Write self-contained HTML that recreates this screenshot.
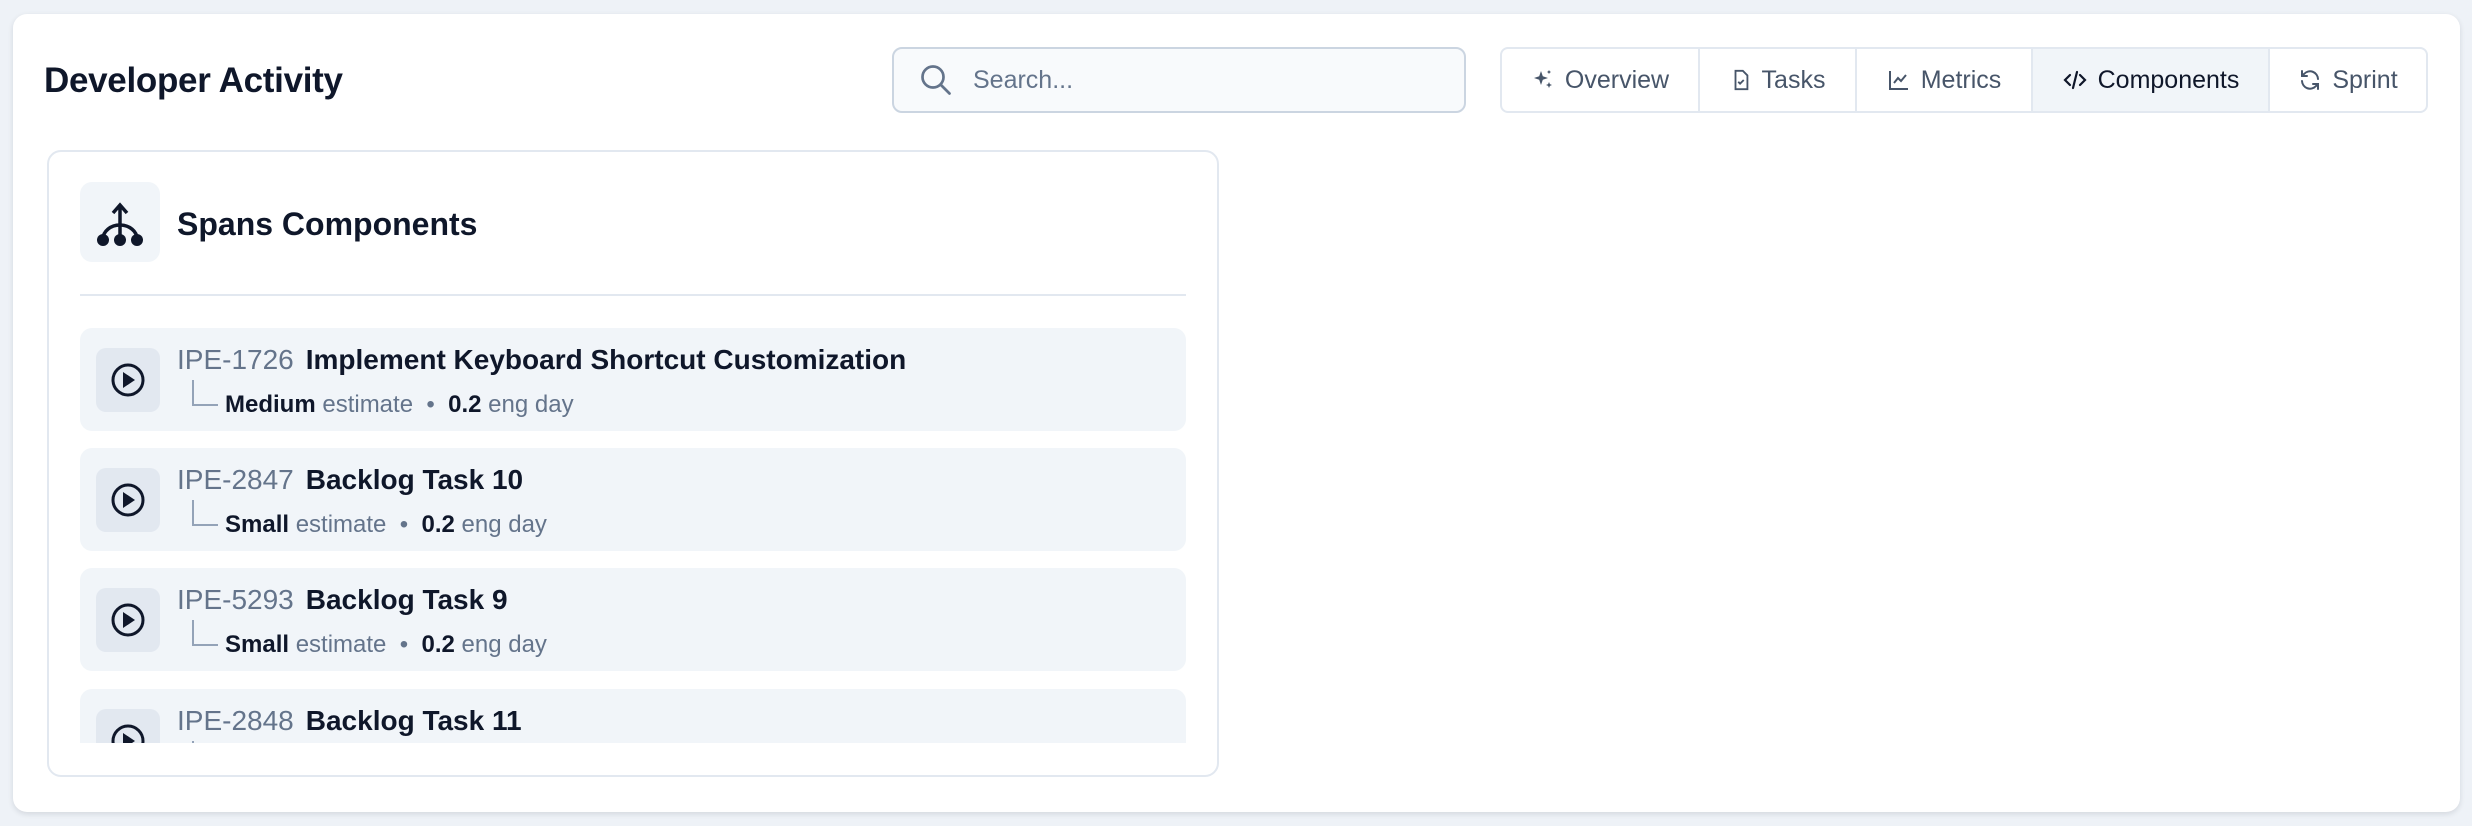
<!DOCTYPE html>
<html><head><meta charset="utf-8"><style>
*{box-sizing:border-box;margin:0;padding:0}
body{width:2472px;height:826px;background:#eef2f7;font-family:"Liberation Sans",sans-serif;position:relative;overflow:hidden}
.a{position:absolute}
.card{left:13px;top:14px;width:2447px;height:798px;background:#fff;border-radius:14px;box-shadow:0 2px 6px rgba(15,23,42,.12)}
.title{left:44px;top:61px;font-size:35px;font-weight:600;color:#0f172a;letter-spacing:-0.3px}
.search{left:892px;top:47px;width:574px;height:66px;background:#f8fafc;border:2px solid #cbd5e1;border-radius:10px}
.ph{left:973px;top:66px;font-size:25px;color:#64748b}
.tabs{left:1500px;top:47px;width:928px;height:66px;border:2px solid #e2e8f0;border-radius:8px;display:flex;overflow:hidden}
.tab{display:flex;align-items:center;justify-content:center;gap:10px;font-size:25px;color:#475569;border-right:2px solid #e2e8f0;height:100%}
.tab:last-child{border-right:none}
.tab.on{background:#f1f5f9;color:#0f172a}
.panel{left:47px;top:150px;width:1172px;height:627px;border:2px solid #e2e8f0;border-radius:14px}
.ib{left:80px;top:182px;width:80px;height:80px;background:#f1f5f9;border-radius:12px}
.ptitle{left:177px;top:206px;font-size:32px;font-weight:600;color:#0f172a}
.div{left:80px;top:294px;width:1106px;height:2px;background:#e2e8f0}
.clip{left:80px;top:328px;width:1106px;height:415px;overflow:hidden}
.row{position:absolute;left:0;width:1106px;height:103px;background:#f1f5f9;border-radius:12px}
.pb{position:absolute;left:16px;top:20px;width:64px;height:64px;background:#e2e8f0;border-radius:10px}
.l1{position:absolute;left:97px;top:16px;font-size:28px;white-space:nowrap}
.id{color:#64748b}
.nm{color:#0f172a;font-weight:600;margin-left:12px}
.tree{position:absolute;left:112px;top:52px;width:26px;height:26px;border-left:2px solid #94a3b8;border-bottom:2px solid #94a3b8}
.l2{position:absolute;left:145px;top:63px;font-size:24px;color:#64748b;white-space:nowrap}
.l2 b{color:#0f172a;font-weight:600}
</style></head><body>
<div class="a card"></div>
<div class="a title">Developer Activity</div>
<div class="a search"></div>
<svg class="a" style="left:918px;top:62px" width="36" height="36" viewBox="0 0 24 24" fill="none" stroke="#64748b" stroke-width="1.8" stroke-linecap="round"><circle cx="10" cy="10" r="7"/><path d="M15.5 15.5L21 21"/></svg>
<div class="a ph">Search...</div>
<div class="a tabs">
<div class="tab" style="width:198px"><svg width="24" height="24" viewBox="0 0 24 24" fill="#475569"><path d="M10 3l1.8 5.2L17 10l-5.2 1.8L10 17l-1.8-5.2L3 10l5.2-1.8z"/><path d="M18 14l.9 2.1L21 17l-2.1.9L18 20l-.9-2.1L15 17l2.1-.9z"/><path d="M18 2l.7 1.3L20 4l-1.3.7L18 6l-.7-1.3L16 4l1.3-.7z"/></svg>Overview</div>
<div class="tab" style="width:157px"><svg width="22" height="26" viewBox="0 0 24 24" fill="none" stroke="#475569" stroke-width="2"><path d="M6 2h8l5 5v15H6z"/><path d="M9 14l2 2 4-4"/></svg>Tasks</div>
<div class="tab" style="width:176px"><svg width="24" height="24" viewBox="0 0 24 24" fill="none" stroke="#475569" stroke-width="2"><path d="M3 3v18h18"/><path d="M7 15l4-5 3 3 5-6"/></svg>Metrics</div>
<div class="tab on" style="width:237px"><svg width="26" height="24" viewBox="0 0 24 24" fill="none" stroke="#0f172a" stroke-width="2.2" stroke-linecap="round"><path d="M7 7l-5 5 5 5M17 7l5 5-5 5M14 4l-4 16"/></svg>Components</div>
<div class="tab" style="flex:1"><svg width="24" height="24" viewBox="0 0 24 24" fill="none" stroke="#475569" stroke-width="2" stroke-linecap="round"><path d="M20 11a8 8 0 0 0-14-5L4 8M4 3v5h5M4 13a8 8 0 0 0 14 5l2-2M20 21v-5h-5"/></svg>Sprint</div>
</div>
<div class="a panel"></div>
<div class="a ib"></div>
<svg class="a" style="left:80px;top:182px" width="80" height="80" viewBox="0 0 80 80"><path d="M40 24v33M33 31l7-8 7 8" fill="none" stroke="#0f172a" stroke-width="3.5"/><path d="M23 57a17 14 0 0 1 34 0" fill="none" stroke="#0f172a" stroke-width="3.5"/><circle cx="23" cy="58" r="6" fill="#0f172a"/><circle cx="40" cy="58" r="6" fill="#0f172a"/><circle cx="57" cy="58" r="6" fill="#0f172a"/></svg>
<div class="a ptitle">Spans Components</div>
<div class="a div"></div>
<div class="a clip">
<div class="row" style="top:0"><div class="pb"><svg width="64" height="64" viewBox="0 0 64 64"><circle cx="32" cy="32" r="15" fill="none" stroke="#0f172a" stroke-width="3"/><path d="M27 24l12 8-12 8z" fill="#0f172a"/></svg></div><div class="l1"><span class="id">IPE-1726</span><span class="nm">Implement Keyboard Shortcut Customization</span></div><div class="tree"></div><div class="l2"><b>Medium</b> estimate &nbsp;•&nbsp; <b>0.2</b> eng day</div></div>
<div class="row" style="top:120px"><div class="pb"><svg width="64" height="64" viewBox="0 0 64 64"><circle cx="32" cy="32" r="15" fill="none" stroke="#0f172a" stroke-width="3"/><path d="M27 24l12 8-12 8z" fill="#0f172a"/></svg></div><div class="l1"><span class="id">IPE-2847</span><span class="nm">Backlog Task 10</span></div><div class="tree"></div><div class="l2"><b>Small</b> estimate &nbsp;•&nbsp; <b>0.2</b> eng day</div></div>
<div class="row" style="top:240px"><div class="pb"><svg width="64" height="64" viewBox="0 0 64 64"><circle cx="32" cy="32" r="15" fill="none" stroke="#0f172a" stroke-width="3"/><path d="M27 24l12 8-12 8z" fill="#0f172a"/></svg></div><div class="l1"><span class="id">IPE-5293</span><span class="nm">Backlog Task 9</span></div><div class="tree"></div><div class="l2"><b>Small</b> estimate &nbsp;•&nbsp; <b>0.2</b> eng day</div></div>
<div class="row" style="top:361px"><div class="pb"><svg width="64" height="64" viewBox="0 0 64 64"><circle cx="32" cy="32" r="15" fill="none" stroke="#0f172a" stroke-width="3"/><path d="M27 24l12 8-12 8z" fill="#0f172a"/></svg></div><div class="l1"><span class="id">IPE-2848</span><span class="nm">Backlog Task 11</span></div><div class="tree"></div><div class="l2"><b>Small</b> estimate &nbsp;•&nbsp; <b>0.2</b> eng day</div></div>
</div>
</body></html>
